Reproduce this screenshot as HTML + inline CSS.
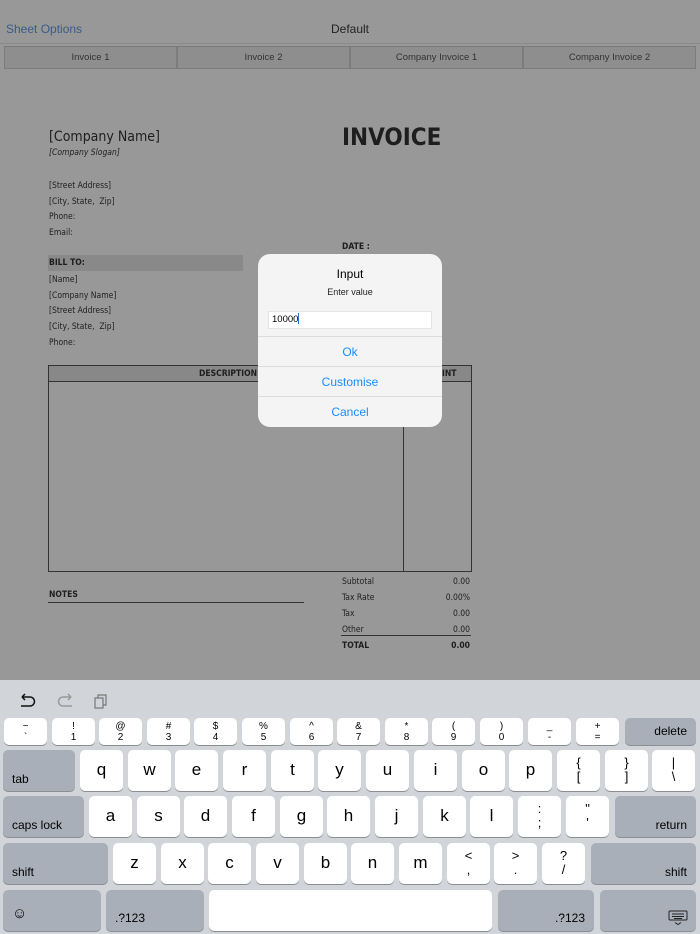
<!DOCTYPE html>
<html><head><meta charset="utf-8"><style>
*{margin:0;padding:0;box-sizing:border-box}
body{width:700px;height:934px;position:relative;overflow:hidden;background:#989898;font-family:"Liberation Sans",sans-serif}
.a{position:absolute}
.inv{font-family:"DejaVu Sans Condensed","DejaVu Sans",sans-serif;font-stretch:condensed;font-size:8.5px;color:#1e1e1e}
.seg{top:46px;height:23px;border:1px solid #7c7c7c;background:#8e8e8e;font-size:9.5px;color:#333;text-align:center;line-height:21px}
.kb{top:680px;left:0;width:700px;height:254px;background:#d1d4d9}
.k{position:absolute;background:#fff;border-radius:5px;box-shadow:0 1px 0 #8a8d92;text-align:center;color:#000}
.d{background:#a9afb9}
.n{top:718px;height:27px;width:43px;font-size:10px;line-height:11px;padding-top:3px}
.r{height:41px;width:43px;font-size:17px;line-height:40px}
.lbl{font-size:12px;text-align:left;padding-left:9px;line-height:12px}
.lr{font-size:12px;text-align:right;padding-right:9px}
</style></head><body>
<div class="a" style="left:6px;top:22px;font-size:12px;color:#3a5a8c">Sheet Options</div>
<div class="a" style="left:0;width:700px;top:22px;font-size:12px;color:#222;text-align:center">Default</div>
<div class="a" style="left:0;top:43px;width:700px;height:1px;background:#8a8a8a"></div>
<div class="a seg" style="left:4px;width:173px">Invoice 1</div>
<div class="a seg" style="left:177px;width:173px">Invoice 2</div>
<div class="a seg" style="left:350px;width:173px">Company Invoice 1</div>
<div class="a seg" style="left:523px;width:173px">Company Invoice 2</div>

<div class="inv">
<div class="a" style="left:49px;top:129px;font-size:14px">[Company Name]</div>
<div class="a" style="left:49px;top:148px;font-style:italic">[Company Slogan]</div>
<div class="a" style="left:342px;top:123px;font-size:24px;font-weight:bold">INVOICE</div>
<div class="a" style="left:49px;top:179px;line-height:15.7px">[Street Address]<br>[City, State,&nbsp; Zip]<br>Phone:<br>Email:</div>
<div class="a" style="left:342px;top:242px;font-weight:bold">DATE :</div>
<div class="a" style="left:48px;top:255px;width:195px;height:16px;background:#898989"></div>
<div class="a" style="left:49px;top:258px;font-weight:bold">BILL TO:</div>
<div class="a" style="left:49px;top:273px;line-height:15.7px">[Name]<br>[Company Name]<br>[Street Address]<br>[City, State,&nbsp; Zip]<br>Phone:</div>
<div class="a" style="left:48px;top:365px;width:424px;height:207px;border:1px solid #333"></div>
<div class="a" style="left:49px;top:366px;width:422px;height:16px;background:#888;border-bottom:1px solid #333"></div>
<div class="a" style="left:403px;top:366px;width:1px;height:205px;background:#333"></div>
<div class="a" style="left:199px;top:369px;font-weight:bold">DESCRIPTION</div>
<div class="a" style="left:442px;top:369px;font-weight:bold">INT</div>
<div class="a" style="left:49px;top:590px;font-weight:bold">NOTES</div>
<div class="a" style="left:48px;top:602px;width:256px;height:1px;background:#333"></div>
<div class="a" style="left:342px;top:574px;line-height:16px">Subtotal<br>Tax Rate<br>Tax<br>Other<br><b>TOTAL</b></div>
<div class="a" style="left:400px;width:70px;text-align:right;top:574px;line-height:16px">0.00<br>0.00%<br>0.00<br>0.00<br><b>0.00</b></div>
<div class="a" style="left:341px;top:635px;width:130px;height:1px;background:#333"></div>
</div>

<div class="a" style="left:258px;top:254px;width:184px;height:173px;background:#f4f4f4;border-radius:12px;overflow:hidden">
<div class="a" style="left:0;width:184px;top:13px;text-align:center;font-size:12px;color:#000">Input</div>
<div class="a" style="left:0;width:184px;top:33px;text-align:center;font-size:9px;color:#222">Enter value</div>
<div class="a" style="left:10px;top:57px;width:164px;height:18px;background:#fff;border:1px solid #e4e4e4;font-size:9.5px;line-height:16px;padding-left:3px;color:#000">10000<span style="display:inline-block;width:1px;height:11px;background:#2f6fe0;vertical-align:-2px"></span></div>
<div class="a" style="left:0;top:82px;width:184px;height:1px;background:#dcdcdc"></div>
<div class="a" style="left:0;top:112px;width:184px;height:1px;background:#dcdcdc"></div>
<div class="a" style="left:0;top:142px;width:184px;height:1px;background:#dcdcdc"></div>
<div class="a" style="left:0;width:184px;top:91px;text-align:center;font-size:12px;color:#1a8cff">Ok</div>
<div class="a" style="left:0;width:184px;top:121px;text-align:center;font-size:12px;color:#1a8cff">Customise</div>
<div class="a" style="left:0;width:184px;top:151px;text-align:center;font-size:12px;color:#1a8cff">Cancel</div>
</div>

<div class="a kb"></div>
<svg class="a" style="left:18px;top:692px" width="100" height="18" viewBox="0 0 100 18" fill="none" stroke-width="1.5">
<path d="M4 5 H12 A4.5 4.5 0 0 1 12 14 H3 M4 5 L7 2 M4 5 L7 8" stroke="#111"/>
<path d="M53 5 H45 A4.5 4.5 0 0 0 45 14 H54 M53 5 L50 2 M53 5 L50 8" stroke="#999"/>
<rect x="77" y="6" width="8" height="10" stroke="#777" stroke-width="1.2"/><path d="M80 6 V3 H88 V13 H85" stroke="#777" stroke-width="1.2"/>
</svg>

<div class="k n" style="left:4px">~<br>`</div>
<div class="k n" style="left:52px">!<br>1</div>
<div class="k n" style="left:99px">@<br>2</div>
<div class="k n" style="left:147px">#<br>3</div>
<div class="k n" style="left:194px">$<br>4</div>
<div class="k n" style="left:242px">%<br>5</div>
<div class="k n" style="left:290px">^<br>6</div>
<div class="k n" style="left:337px">&amp;<br>7</div>
<div class="k n" style="left:385px">*<br>8</div>
<div class="k n" style="left:432px">(<br>9</div>
<div class="k n" style="left:480px">)<br>0</div>
<div class="k n" style="left:528px">_<br>-</div>
<div class="k n" style="left:576px">+<br>=</div>
<div class="k d" style="left:625px;top:718px;width:71px;height:27px;font-size:12px;line-height:27px;text-align:right;padding-right:9px">delete</div>

<div class="k d lbl" style="left:3px;top:750px;width:72px;height:41px;padding-top:23px">tab</div>
<div class="k r" style="left:80px;top:750px">q</div>
<div class="k r" style="left:128px;top:750px">w</div>
<div class="k r" style="left:175px;top:750px">e</div>
<div class="k r" style="left:223px;top:750px">r</div>
<div class="k r" style="left:271px;top:750px">t</div>
<div class="k r" style="left:318px;top:750px">y</div>
<div class="k r" style="left:366px;top:750px">u</div>
<div class="k r" style="left:414px;top:750px">i</div>
<div class="k r" style="left:462px;top:750px">o</div>
<div class="k r" style="left:509px;top:750px">p</div>
<div class="k r" style="left:557px;top:750px;font-size:13px;line-height:14px;padding-top:6px">{<br>[</div>
<div class="k r" style="left:605px;top:750px;font-size:13px;line-height:14px;padding-top:6px">}<br>]</div>
<div class="k r" style="left:652px;top:750px;font-size:13px;line-height:14px;padding-top:6px">|<br>\</div>

<div class="k d lbl" style="left:3px;top:796px;width:81px;height:41px;padding-top:23px">caps lock</div>
<div class="k r" style="left:89px;top:796px">a</div>
<div class="k r" style="left:137px;top:796px">s</div>
<div class="k r" style="left:184px;top:796px">d</div>
<div class="k r" style="left:232px;top:796px">f</div>
<div class="k r" style="left:280px;top:796px">g</div>
<div class="k r" style="left:327px;top:796px">h</div>
<div class="k r" style="left:375px;top:796px">j</div>
<div class="k r" style="left:423px;top:796px">k</div>
<div class="k r" style="left:470px;top:796px">l</div>
<div class="k r" style="left:518px;top:796px;font-size:13px;line-height:14px;padding-top:6px">:<br>;</div>
<div class="k r" style="left:566px;top:796px;font-size:13px;line-height:14px;padding-top:6px">"<br>'</div>
<div class="k d lr" style="left:615px;top:796px;width:81px;height:41px;padding-top:23px;line-height:12px">return</div>

<div class="k d lbl" style="left:3px;top:843px;width:105px;height:41px;padding-top:23px">shift</div>
<div class="k r" style="left:113px;top:843px">z</div>
<div class="k r" style="left:161px;top:843px">x</div>
<div class="k r" style="left:208px;top:843px">c</div>
<div class="k r" style="left:256px;top:843px">v</div>
<div class="k r" style="left:304px;top:843px">b</div>
<div class="k r" style="left:351px;top:843px">n</div>
<div class="k r" style="left:399px;top:843px">m</div>
<div class="k r" style="left:447px;top:843px;font-size:13px;line-height:14px;padding-top:6px">&lt;<br>,</div>
<div class="k r" style="left:494px;top:843px;font-size:13px;line-height:14px;padding-top:6px">&gt;<br>.</div>
<div class="k r" style="left:542px;top:843px;font-size:13px;line-height:14px;padding-top:6px">?<br>/</div>
<div class="k d lr" style="left:591px;top:843px;width:105px;height:41px;padding-top:23px;line-height:12px">shift</div>

<div class="k d lbl" style="left:3px;top:890px;width:98px;height:41px;padding-top:18px;font-size:15px">☺</div>
<div class="k d lbl" style="left:106px;top:890px;width:98px;height:41px;padding-top:22px">.?123</div>
<div class="k" style="left:209px;top:890px;width:283px;height:41px"></div>
<div class="k d lr" style="left:498px;top:890px;width:96px;height:41px;padding-top:22px;line-height:12px">.?123</div>
<div class="k d" style="left:600px;top:890px;width:96px;height:41px">
<svg class="a" style="left:68px;top:20px" width="20" height="16" viewBox="0 0 20 16" fill="none" stroke="#222" stroke-width="1"><rect x="1" y="1" width="18" height="9" rx="1"/><path d="M4 4h12M4 6.5h12M6 8.5h8M7 12.5l3 2 3-2"/></svg>
</div>
</body></html>
